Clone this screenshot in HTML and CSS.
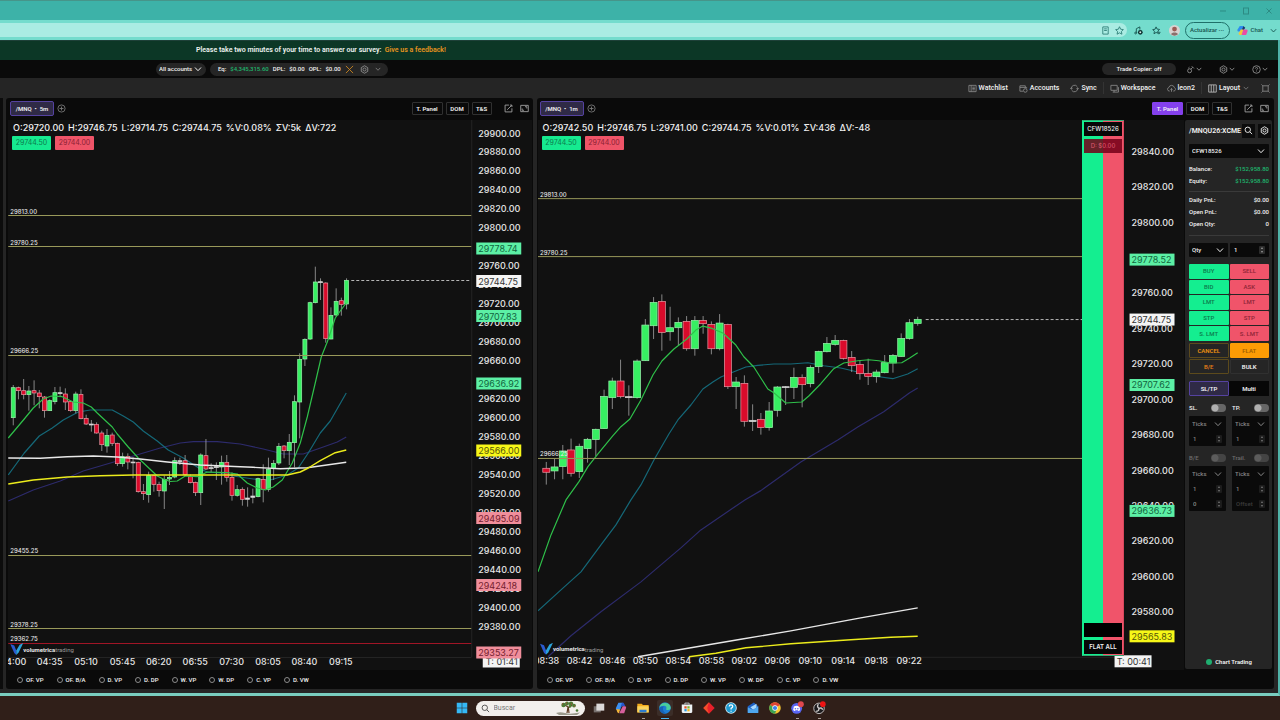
FILE: index.html
```html
<!DOCTYPE html>
<html lang="en">
<head>
<meta charset="utf-8">
<title>Volumetrica Trading</title>
<link rel="stylesheet" href="styles.css">
</head>
<body>
<svg class="sprite" aria-hidden="true">
  <symbol id="chev" viewBox="0 0 8 8"><path d="M1 2.5 4 5.7 7 2.5"/></symbol>
  <symbol id="gear" viewBox="0 0 10 10"><path d="M5 .8 8.6 2.9V7.1L5 9.2 1.4 7.1V2.9Z"/><circle cx="5" cy="5" r="1.7"/></symbol>
  <symbol id="plus" viewBox="0 0 10 10"><circle cx="5" cy="5" r="4"/><path d="M5 2.8V7.2M2.8 5H7.2"/></symbol>
  <symbol id="edit" viewBox="0 0 10 10"><path d="M5.5 1.2H1.2V8.8H8.8V4.8M3.6 6.4 8.6 1.4M6.6 1.2H8.8V3.4"/></symbol>
  <symbol id="expand" viewBox="0 0 10 10"><path d="M.8 1.5H9.2V8.5H.8ZM5.6 3H7.6V5M2.4 5V7H4.4"/></symbol>
  <symbol id="vlogo" viewBox="0 0 13 12"><path d="M0 1 4 2.4 6 7.6 6 12 4 10Z" fill="#2b5bd0"/><path d="M13 0 9.4 1.8 6 7.6V12L8.4 9.4Z" fill="#2ba4dc"/></symbol>
</svg>

<header class="titlebar">
  <button class="win" aria-label="Minimize"><svg viewBox="0 0 8 8"><path d="M1 4H7"/></svg></button>
  <button class="win" aria-label="Maximize"><svg viewBox="0 0 8 8"><rect x="1.5" y="1" width="5" height="6"/></svg></button>
  <button class="win" aria-label="Close"><svg viewBox="0 0 8 8"><path d="M1.5 1.5 6.5 6.5M6.5 1.5 1.5 6.5"/></svg></button>
</header>
<nav class="toolbar">
  <div class="address">
    <svg class="ic" viewBox="0 0 10 10"><path d="M2 1H8V9H2ZM3.5 3.2H6.5M3.5 5H6.5"/></svg>
    <svg class="ic" viewBox="0 0 10 10"><path d="M5 .8 6.3 3.6 9.3 4 7.1 6.1 7.7 9.1 5 7.6 2.3 9.1 2.9 6.1 .7 4 3.7 3.6Z"/></svg>
  </div>
  <svg class="ic ext1" viewBox="0 0 10 10"><path d="M2.6 7.6V3L6.5 1V4"/><circle cx="1.8" cy="7.8" r="1"/><circle cx="7" cy="7" r="2.6" fill="#0b2f2e" stroke="none"/><path d="M6 7H8M7 6V8" stroke="#e8fffb"/></svg>
  <svg class="ic ext2" viewBox="0 0 10 10"><path d="M4.5 1 5.6 3.4 8.4 3.8 6.4 5.8 6.6 8 4.5 7.2 2.2 8.6 2.7 5.9 .8 4 3.4 3.6ZM7.6 6V9M9.2 6.6 7.6 9"/></svg>
  <svg class="avatar" viewBox="0 0 12 12"><circle cx="6" cy="6" r="6" fill="#d9d3d1"/><circle cx="6" cy="4.4" r="2.6" fill="#9b5b54"/><path d="M2.2 10.2C3 7.6 9 7.6 9.8 10.2A6 6 0 0 1 2.2 10.2Z" fill="#8a6f6c"/></svg>
  <button class="update">Actualizar <b>···</b></button>
  <button class="chat"><svg viewBox="0 0 12 12"><path d="M3 1H7L5 7H1Q0 7 .6 5Z" fill="#2b8df0"/><path d="M7 1 9 3 7 6 5.4 5Z" fill="#17356f"/><path d="M4 5 7 5 5 11H3Q1.6 11 2 9Z" fill="#f5c53a"/><path d="M7 5H10.6Q12 5 11.4 7L10 11H5Z" fill="#ea4ea5"/></svg>Chat</button>
  <svg class="ic tchev"><use href="#chev"/></svg>
</nav>

<div class="frame">
  <div class="banner">Please take two minutes of your time to answer our survey:  <a href="#">Give us a feedback!</a></div>

  <div class="accountbar">
    <label class="select pill allacc"><select aria-label="Accounts"><option>All accounts</option></select><svg class="ic"><use href="#chev"/></svg></label>
    <div class="pill totals">
      <span>Eq:</span><span class="money">$4,345,315.60</span><span>DPL:</span><span>$0.00</span><span>OPL:</span><span>$0.00</span>
      <svg class="ic xx" viewBox="0 0 10 10"><path d="M1 1 9 9M9 1 1 9"/></svg>
      <svg class="ic dim"><use href="#gear"/></svg><svg class="ic dim small"><use href="#chev"/></svg>
    </div>
    <div class="right">
      <button class="pill copier">Trade Copier: off</button>
      <button class="menu"><svg class="ic dim" viewBox="0 0 10 10"><circle cx="4" cy="6.4" r="2.2"/><path d="M5.5 4.6 7.4 2.6M6.4 1.4 8.8 3.8M2.6 3.4 3.8 2.4"/></svg><svg class="ic small"><use href="#chev"/></svg></button>
      <button class="menu"><svg class="ic dim"><use href="#gear"/></svg><svg class="ic small"><use href="#chev"/></svg></button>
      <button class="menu"><svg class="ic dim" viewBox="0 0 10 10"><circle cx="5" cy="5" r="4.2"/><path d="M3.7 4Q3.8 2.8 5 2.8T6.2 4Q6.2 4.7 5 5.4V6M5 7V7.5"/></svg><svg class="ic small"><use href="#chev"/></svg></button>
    </div>
  </div>

  <div class="tools">
    <button><svg class="ic" viewBox="0 0 10 10"><path d="M1 1.5H9V8.5H1ZM3.5 1.5V8.5M4.8 3.5H7.6M4.8 5H7.6M4.8 6.5H7.6"/></svg>Watchlist</button>
    <button class="g"><svg class="ic" viewBox="0 0 10 10"><path d="M1 2V8H4.6M1 2H7V4M1 3.8H8.5V5"/><circle cx="7" cy="7.2" r="2"/></svg>Accounts</button>
    <button class="g"><svg class="ic" viewBox="0 0 10 10"><path d="M1.4 5.5A3.7 3.7 0 0 1 8 2.8M8.6 4.5A3.7 3.7 0 0 1 2 7.2M.4 4.3 1.4 5.8 2.9 4.7M9.6 5.7 8.6 4.2 7.1 5.3"/></svg>Sync</button>
    <i></i>
    <button><svg class="ic" viewBox="0 0 10 10"><path d="M1 1.5H8V7H1ZM3 9H9.4V3.5M4.5 7V9"/></svg>Workspace</button>
    <button class="g"><svg class="ic" viewBox="0 0 10 10"><path d="M3 7.8H2.4A2 2 0 0 1 2 3.9 3.2 3.2 0 0 1 8.2 4 2 2 0 0 1 7.8 7.8H7M5 8.6V5M3.8 6.2 5 5 6.2 6.2"/></svg>leon2</button>
    <i></i>
    <button><svg class="ic lit" viewBox="0 0 10 10"><path d="M.8 1H9.2V9H.8ZM3.6 1V9M6.4 1V9"/></svg>Layout<svg class="ic small lay"><use href="#chev"/></svg></button>
    <button class="full" aria-label="Full screen"><svg class="ic" viewBox="0 0 10 10"><path d="M2 2H8V8H2ZM.5 .5 2 2M9.5 .5 8 2M.5 9.5 2 8M9.5 9.5 8 8"/></svg></button>
  </div>

  <main class="workspace">
    <div class="sliver"></div>

    <section class="panel five">
      <div class="phead">
        <button class="sym">/MNQ &nbsp;•&nbsp; 5m</button><button class="add" aria-label="Add"><svg class="ic"><use href="#plus"/></svg></button>
        <div class="pbtns"><button class="tp">T. Panel</button><button class="dm">DOM</button><button class="ts">T&amp;S</button>
        <button class="ib e1" aria-label="Pop out"><svg class="ic"><use href="#edit"/></svg></button><button class="ib" aria-label="Expand"><svg class="ic"><use href="#expand"/></svg></button></div>
      </div>
      <div class="pbody">
        <div class="chart">
          <svg class="plot" id="left" viewBox="8 120 523 550" role="img" aria-label="MNQ 5 minute chart"></svg>
          <div class="over">
            <p class="ohlc"><span>O:29720.00</span><span>H:29746.75</span><span>L:29714.75</span><span>C:29744.75</span><span>%V:0.08%</span><span>ΣV:5k</span><span>ΔV:722</span></p>
            <div class="quote"><button class="bid">29744.50</button><button class="ask">29744.00</button></div>
          </div>
        </div>
      </div>
      <div class="pfoot">
        <label><input type="radio">OF. VP</label><label><input type="radio">OF. B/A</label><label><input type="radio">D. VP</label><label><input type="radio">D. DP</label><label><input type="radio">W. VP</label><label><input type="radio">W. DP</label><label><input type="radio">C. VP</label><label><input type="radio">D. VW</label>
      </div>
    </section>

    <section class="panel one">
      <div class="phead">
        <button class="sym">/MNQ &nbsp;•&nbsp; 1m</button><button class="add" aria-label="Add"><svg class="ic"><use href="#plus"/></svg></button>
        <div class="pbtns"><button class="tp on">T. Panel</button><button class="dm">DOM</button><button class="ts">T&amp;S</button>
        <button class="ib e1" aria-label="Pop out"><svg class="ic"><use href="#edit"/></svg></button><button class="ib" aria-label="Expand"><svg class="ic"><use href="#expand"/></svg></button></div>
      </div>
      <div class="pbody">
        <div class="chart">
          <svg class="plot" id="right" viewBox="537 120 647 550" role="img" aria-label="MNQ 1 minute chart"></svg>
          <div class="over">
            <p class="ohlc"><span>O:29742.50</span><span>H:29746.75</span><span>L:29741.00</span><span>C:29744.75</span><span>%V:0.01%</span><span>ΣV:436</span><span>ΔV:-48</span></p>
            <div class="quote"><button class="bid">29744.50</button><button class="ask">29744.00</button></div>
          </div>
          <div class="ladder">
            <div class="acct">CFW18526</div>
            <div class="pnl">D: $0.00</div>
            <div class="blank"></div>
            <button class="flatall">FLAT ALL</button>
          </div>
        </div>
        <aside class="side">
          <div class="stitle"><h2>/MNQU26:XCME</h2><button aria-label="Search"><svg class="ic" viewBox="0 0 10 10"><circle cx="4.2" cy="4.2" r="3"/><path d="M6.5 6.5 9 9"/></svg></button><button aria-label="Settings"><svg class="ic"><use href="#gear"/></svg></button></div>
          <label class="select box acc"><select aria-label="Account"><option>CFW18526</option></select><svg class="ic"><use href="#chev"/></svg></label>
          <dl class="stats"><div><dt>Balance:</dt><dd class="up">$152,958.80</dd></div><div><dt>Equity:</dt><dd class="up">$152,958.80</dd></div></dl>
          <dl class="stats line"><div><dt>Daily PnL:</dt><dd>$0.00</dd></div><div><dt>Open PnL:</dt><dd>$0.00</dd></div><div><dt>Open Qty:</dt><dd>0</dd></div></dl>
          <div class="qty"><label class="select box"><select aria-label="Size type"><option>Qty</option></select><svg class="ic"><use href="#chev"/></svg></label><label class="num box"><input type="text" value="1" aria-label="Quantity"><b></b></label></div>
          <div class="orders"><button class="b">BUY</button><button class="s">SELL</button><button class="b">BID</button><button class="s">ASK</button><button class="b">LMT</button><button class="s">LMT</button><button class="b">STP</button><button class="s">STP</button><button class="b">S. LMT</button><button class="s">S. LMT</button></div>
          <div class="acts"><button class="o">CANCEL</button><button class="flat">FLAT</button><button class="o be">B/E</button><button class="bulk">BULK</button></div>
          <div class="tabs"><button class="on">SL/TP</button><button>Multi</button></div>
          <div class="brackets">
            <div><label class="tog">SL.<input type="checkbox"></label>
              <div class="stack"><label class="select"><select aria-label="SL unit"><option>Ticks</option></select><svg class="ic"><use href="#chev"/></svg></label><label class="num"><input type="text" value="1" aria-label="SL value"><b></b></label></div></div>
            <div><label class="tog">TP.<input type="checkbox"></label>
              <div class="stack"><label class="select"><select aria-label="TP unit"><option>Ticks</option></select><svg class="ic"><use href="#chev"/></svg></label><label class="num"><input type="text" value="1" aria-label="TP value"><b></b></label></div></div>
            <div><label class="tog off">B/E<input type="checkbox"></label>
              <div class="stack"><label class="select"><select aria-label="B/E unit"><option>Ticks</option></select><svg class="ic"><use href="#chev"/></svg></label><label class="num"><input type="text" value="1" aria-label="B/E value"><b></b></label><label class="num"><input type="text" value="0" aria-label="B/E offset"><b></b></label></div></div>
            <div><label class="tog off">Trail.<input type="checkbox"></label>
              <div class="stack"><label class="select"><select aria-label="Trail unit"><option>Ticks</option></select><svg class="ic"><use href="#chev"/></svg></label><label class="num"><input type="text" value="1" aria-label="Trail value"><b></b></label><label class="num"><input type="text" placeholder="Offset" aria-label="Trail offset"><b></b></label></div></div>
          </div>
          <div class="status"><i></i>Chart Trading</div>
        </aside>
      </div>
      <div class="pfoot">
        <label><input type="radio">OF. VP</label><label><input type="radio">OF. B/A</label><label><input type="radio">D. VP</label><label><input type="radio">D. DP</label><label><input type="radio">W. VP</label><label><input type="radio">W. DP</label><label><input type="radio">C. VP</label><label><input type="radio">D. VW</label>
      </div>
    </section>
  </main>
</div>

<footer class="taskbar">
  <button class="app" aria-label="Start"><svg viewBox="0 0 16 16"><path d="M2 2H7.7V7.7H2ZM8.3 2H14V7.7H8.3ZM2 8.3H7.7V14H2ZM8.3 8.3H14V14H8.3Z" fill="#35b8f5"/></svg></button>
  <label class="search"><svg class="ic" viewBox="0 0 10 10"><circle cx="4.2" cy="4.2" r="3"/><path d="M6.5 6.5 9 9"/></svg><input type="text" placeholder="Buscar" aria-label="Buscar">
    <svg class="tree" viewBox="0 0 25 14"><path d="M0 12Q4 10.5 9 12T24 11.5L21 14H3Z" fill="#9b9a8c"/><path d="M11 12 12 6 9 4M12 7 16 4M13 12 12.4 7" stroke="#5d3a21" stroke-width="1.2" fill="none"/><g fill="#4c7a34"><circle cx="7.5" cy="4" r="2.2"/><circle cx="11" cy="2.6" r="2"/><circle cx="15" cy="2.6" r="2.2"/><circle cx="18" cy="4.6" r="1.9"/><circle cx="14" cy="5.3" r="1.4"/></g><path d="M6 3H7M10 2H11M15 3H16M18 5H19" stroke="#b8433a"/><circle cx="21" cy="9.5" r="1.3" fill="#4c7a34"/></svg></label>
  <button class="app" aria-label="Task view"><svg viewBox="0 0 16 16"><path d="M2 6H10V13H2Z" fill="#77706e"/><path d="M5 3H14V11H5Z" fill="#dcd9d8"/></svg></button>
  <button class="app" aria-label="Copilot"><svg viewBox="0 0 16 16"><path d="M5 2H10L7 10H3Q1.6 10 2.2 8Z" fill="#3b8ff0"/><path d="M9 2 11 2 13 6H9L7.4 8Z" fill="#2753c8"/><path d="M2.6 9 7 9.6 5.6 14Q4 14 3.6 12.4Z" fill="#f2b63b"/><path d="M10 6H12.6Q14.4 6 13.8 8L11.6 14H6Z" fill="#d7609c"/></svg></button>
  <button class="app run" aria-label="File Explorer"><svg viewBox="0 0 16 16"><path d="M1.5 3H6.5L8 4.6H14.5V13H1.5Z" fill="#f3ab1c"/><path d="M1.5 6H14.5V13H1.5Z" fill="#fbd45c"/><path d="M4 10H12V13H4Z" fill="#2c7bd0"/></svg></button>
  <button class="app run cur" aria-label="Edge"><svg viewBox="0 0 16 16"><circle cx="8" cy="8" r="6.6" fill="#1e7fd4"/><path d="M1.5 8A6.6 6.6 0 0 1 14.6 8Q14.4 10.4 11.6 10.4T9.4 9Q10.4 6 7.4 5.4 3 5 1.5 8Z" fill="#49cf9c"/><path d="M5.6 8.6Q5.6 12.8 10 14.2 6 15.4 3.2 12.6 1 10 1.6 7.6Q3.6 5.6 6.8 6.4 5.6 7.4 5.6 8.6Z" fill="#1763b8"/></svg></button>
  <button class="app" aria-label="Store"><svg viewBox="0 0 16 16"><path d="M5.6 4V2.4H10.4V4" stroke="#cfd8de" fill="none"/><path d="M2 4H14V12.4Q14 13.6 12.8 13.6H3.2Q2 13.6 2 12.4Z" fill="#eef2f4"/><path d="M5 6H7.6V8.6H5Z" fill="#e4512b"/><path d="M8.4 6H11V8.6H8.4Z" fill="#7fb72f"/><path d="M5 9.2H7.6V11.8H5Z" fill="#2a9ae0"/><path d="M8.4 9.2H11V11.8H8.4Z" fill="#f5b51c"/></svg></button>
  <button class="app" aria-label="AnyDesk"><svg viewBox="0 0 16 16"><path d="M8 1.5 14.5 8 8 14.5 1.5 8Z" fill="#e8202a"/><path d="M1.5 8 8 1.5 6 8 8 14.5Z" fill="#f2502c"/></svg></button>
  <button class="app" aria-label="Help"><svg viewBox="0 0 16 16"><circle cx="8" cy="8" r="6.6" fill="#d8f0fa"/><circle cx="8" cy="8" r="5.6" fill="#1f9bd2"/><path d="M6 6.4Q6 4.4 8 4.4T10 6.3Q10 7.4 8.1 8.4V9.6M8.1 11V12.2" stroke="#fff" stroke-width="1.4" fill="none"/></svg></button>
  <button class="app" aria-label="Mail"><svg viewBox="0 0 16 16"><path d="M2 6 9 1.6 14 6V13H2Z" fill="#1c5fc4"/><path d="M2 7 8 10.4 14 6V13.6H2Z" fill="#4ea7ef"/><path d="M5 7 12 3V7.4L8 10Z" fill="#a8d8fb"/></svg></button>
  <button class="app" aria-label="Chrome"><svg viewBox="0 0 16 16"><circle cx="8" cy="8" r="6.6" fill="#f4c430"/><path d="M8 8 2.3 4.7A6.6 6.6 0 0 1 13.7 4.7Z" fill="#df4434"/><path d="M8 8 2.3 4.7A6.6 6.6 0 0 0 8 14.6L10 9Z" fill="#3ba455"/><path d="M8 4.7H13.7L8 6Z" fill="#df4434"/><circle cx="8" cy="8" r="3.1" fill="#fff"/><circle cx="8" cy="8" r="2.4" fill="#3f7fe8"/></svg></button>
  <button class="app run" aria-label="Discord"><svg viewBox="0 0 16 16"><circle cx="7.6" cy="8.4" r="6.2" fill="#5865f2"/><path d="M4.4 6.2Q7.6 4.8 10.8 6.2L11.6 10.4Q10.6 11.4 9.6 11.4L9 10.6H6.2L5.6 11.4Q4.6 11.4 3.6 10.4Z" fill="#fff"/><circle cx="6.2" cy="8.8" r=".9" fill="#5865f2"/><circle cx="9" cy="8.8" r=".9" fill="#5865f2"/><circle cx="12.4" cy="3.6" r="3.4" fill="#e0484e"/></svg></button>
  <button class="app run" aria-label="OBS"><svg viewBox="0 0 16 16"><circle cx="8" cy="8.4" r="6" fill="#1c1b1d" stroke="#d0cccc"/><path d="M8 8.4Q5 6 7.4 3.8M8 8.4Q11.6 7 12 10M8 8.4Q8 12 4.8 11.6" stroke="#d0cccc" stroke-width="1.6" fill="none"/><circle cx="12.4" cy="3.6" r="3.2" fill="#ee1414"/></svg></button>
</footer>
<script src="chart.js"></script>
</body>
</html>
```

FILE: styles.css
```css
* { box-sizing: border-box; }
body {
  margin: 0; height: 100vh; display: flex; flex-direction: column; overflow: hidden;
  background: #261c18; color: #f2f2f2;
  font: 500 6px/8px Roboto, "Open Sans", sans-serif;
}
button, input, select { font: inherit; color: inherit; background: none; border: 0; padding: 0; margin: 0; border-radius: 0; }
input { outline: 0; min-width: 0; }
select { appearance: none; width: 100%; height: 100%; }
p, h2, dl, dd { margin: 0; }
.sprite { position: absolute; width: 0; height: 0; }
.ic { width: 9px; height: 9px; flex: none; fill: none; stroke: currentColor; stroke-width: 1; }
.small { width: 6px; height: 6px; }
.dim { color: #8d8d8d; }

/* browser window */
.titlebar { flex: 0 0 20px; background: #3db2a8; border-top: 1px solid #46958a; display: flex; justify-content: flex-end; align-items: center; gap: 15px; padding-right: 7px; }
.win { width: 8px; height: 8px; display: flex; }
.win svg { width: 8px; height: 8px; fill: none; stroke: #2d8b83; stroke-width: 1; }
.toolbar { flex: 0 0 20px; background: #74dccd; display: flex; align-items: center; color: #17544f; padding-right: 3px; }
.address { flex: 1; height: 14px; background: #aaece3; border-radius: 0 7px 7px 0; display: flex; justify-content: flex-end; align-items: center; gap: 5px; padding-right: 3px; color: #2f7f78; }
.ext1 { margin-left: 7px; }
.ext2 { margin-left: 9px; }
.avatar { width: 11px; height: 11px; margin-left: 8px; }
.update { width: 45px; height: 17px; margin-left: 5px; border: 1px solid #1f7069; border-radius: 9px; white-space: nowrap; }
.update b { font-weight: 700; }
.chat { display: flex; align-items: center; gap: 3px; margin-left: 7px; }
.chat svg { width: 11px; height: 11px; }
.tchev { width: 7px; height: 7px; margin-left: 7px; }

.frame { flex: 1; min-height: 0; display: flex; flex-direction: column; background: #252525; border-right: 2px solid #4fb3a8; border-bottom: 3px solid #79cdbf; }
.banner { flex: 0 0 20px; background: #0c3726; border-top: 1px solid #1e4038; padding-left: 196px; font-size: 7px; font-weight: 600; line-height: 19px; color: #eef3f0; white-space: pre; }
.banner a { color: #e5941f; text-decoration: none; }

.accountbar { flex: 0 0 18px; background: #0a0a0a; display: flex; align-items: center; padding: 0 10px 0 156px; gap: 4px; }
.pill { height: 13px; border-radius: 7px; background: #252525; display: flex; align-items: center; }
.select { position: relative; display: block; }
.select .ic { position: absolute; right: 4px; top: 0; bottom: 0; margin: auto 0; width: 8px; height: 8px; pointer-events: none; }
.allacc { width: 50px; }
.allacc select { padding-left: 3px; }
.totals { width: 178px; padding: 0 9px 0 8px; gap: 4px; white-space: nowrap; }
.totals .money { color: #1fb56d; }
.xx { color: #c88420; margin-left: auto; }
.totals .dim { margin-left: 2px; }
.right { margin-left: auto; display: flex; align-items: center; }
.copier { width: 74px; height: 12px; justify-content: center; margin-right: 10px; }
.menu { display: flex; align-items: center; gap: 1px; margin-left: 17px; color: #a8a8a8; }
.copier + .menu { margin-left: 0; }

.tools { flex: 0 0 20px; background: #252525; display: flex; align-items: center; justify-content: flex-end; padding-right: 8px; font-size: 7px; }
.tools button { display: flex; align-items: center; gap: 2px; white-space: nowrap; }
.tools .ic { color: #858585; }
.tools .lit { color: #b5b5b5; }
.tools .lay { margin-left: 1px; }
.tools i { width: 1px; height: 12px; background: #343434; margin: 0 6px; }
.tools .g { margin-left: 11px; }
.tools .full { margin-left: 12px; }

/* chart panels */
.workspace { flex: 1; min-height: 0; display: flex; padding: 0 4px 4px 0; }
.sliver { flex: 0 0 3px; background: #0c0c0c; margin-right: 3px; }
.panel { display: flex; flex-direction: column; min-width: 0; background: #0a0a0a; border-radius: 3px; }
.five { flex: 526 1 0; margin-right: 4px; padding: 0 1px 0 2px; }
.one { flex: 738 1 0; padding: 0 2px 0 1px; }
.phead { flex: 0 0 22px; display: flex; align-items: center; padding: 0 3px 1px 2px; font-weight: 600; }
.sym { width: 44px; height: 15px; border: 1px solid #5542a0; border-radius: 2px; background: #2f2a46; white-space: nowrap; }
.add { margin-left: 3px; display: flex; color: #777; }
.pbtns { margin-left: auto; display: flex; align-items: center; }
.pbtns button { height: 13px; border: 1px solid #303030; border-radius: 1px; margin-right: 3px; }
.pbtns .tp { width: 31px; }
.pbtns .dm { width: 23px; }
.pbtns .ts { width: 20px; }
.pbtns .on { background: #8440ec; border-color: #8440ec; }
.pbtns .ib { border: 0; display: flex; align-items: center; color: #a0a0a0; margin: 0; }
.pbtns .e1 { margin: 0 7px 0 9px; }
.pbody { flex: 1; min-height: 0; display: flex; gap: 1px; }
.chart { flex: 1; min-width: 0; position: relative; background: #111; }
.plot { display: block; width: 100%; height: 100%; }
.over { position: absolute; left: 4px; top: 2px; font-family: Inter, "Open Sans", sans-serif; }
.ohlc { display: flex; gap: 4px; font-size: 9px; line-height: 12px; font-weight: 500; white-space: nowrap; padding-left: 1px; }
.quote { display: flex; gap: 4px; margin-top: 2px; }
.quote button { width: 39px; height: 14px; border-radius: 1px; font-size: 7px; font-weight: 400; }
.bid { background: #16ea90; color: #0c7a4d; }
.ask { background: #ef5468; color: #8a2133; }
.ladder { position: absolute; right: 60px; top: 0; bottom: 14px; width: 42px; padding: 1px; display: flex; flex-direction: column; gap: 3px; background: linear-gradient(90deg, #14ee90 50%, #f0546a 50%); border: 1px solid; border-color: #2fae74 #d7475c #2fae74 #14ee90; text-align: center; font-family: Inter, "Open Sans", sans-serif; font-weight: 500; }
.ladder > * { height: 14px; line-height: 14px; flex: none; background: #070707; }
.ladder .pnl { background: rgba(117, 0, 24, .86); color: #d7546a; }
.ladder .blank { margin-top: auto; background: #000; }
.ladder .flatall { font-weight: 600; }
.pfoot { flex: 0 0 19px; display: flex; align-items: center; padding-left: 9px; gap: 13px; }
.pfoot label { display: flex; align-items: center; gap: 3px; white-space: nowrap; }
.pfoot input { appearance: none; width: 6px; height: 6px; border: 1px solid #8b8b8b; border-radius: 50%; }

/* chart drawing */
.plot text { font-family: Inter, "Open Sans", sans-serif; font-size: 9px; font-weight: 500; fill: #e6e6e6; dominant-baseline: central; }
.plot .mid { text-anchor: middle; }
.plot .lvl { font-size: 6px; }
.plot .tag { font-weight: 400; }
.plot .brand { font-family: Roboto, "Open Sans", sans-serif; font-size: 6px; font-weight: 700; }
.plot .thin { font-weight: 400; fill: #9a9a9a; dominant-baseline: central; }
.plot polyline { fill: none; stroke-linejoin: round; }

/* trading panel */
.side { flex: 0 0 87px; min-width: 0; background: #252525; border-radius: 2px; padding: 3px 3px 3px 4px; display: flex; flex-direction: column; margin-bottom: 1px; }
.stitle { display: flex; align-items: center; height: 15px; margin-right: -2px; }
.stitle h2 { font-size: 7px; font-weight: 600; flex: 1; min-width: 0; white-space: nowrap; }
.stitle button { width: 13px; height: 14px; background: #0c0c0c; display: flex; align-items: center; justify-content: center; margin-left: 3px; flex: none; }
.stitle button:first-of-type { margin-left: 0; }
.box { height: 14px; background: #0a0a0a; border-radius: 1px; }
.box select { padding-left: 3px; }
.acc { margin-top: 6px; }
.stats { padding: 5px 0 4px; border-bottom: 1px solid #3a3a3a; }
.stats div { display: flex; justify-content: space-between; line-height: 12px; }
.stats .up { color: #1fb56d; }
.line { padding: 2px 0 5px; }
.qty { display: grid; grid-template-columns: repeat(2, minmax(0, 1fr)); gap: 2px; margin-top: 7px; }
.num { display: flex; align-items: center; padding: 0 4px; }
.num input { flex: 1; width: 0; }
.num b { width: 6px; height: 8px; border-radius: 1px; background: #2c2c2c; display: flex; flex-direction: column; align-items: center; justify-content: center; gap: 2px; }
.num b::before, .num b::after { content: ""; width: 0; border: 1px solid transparent; border-bottom: 2px solid #9c9c9c; border-top: 0; }
.num b::after { border-bottom: 0; border-top: 2px solid #9c9c9c; }
.orders { display: grid; grid-template: repeat(5, minmax(0, 1fr)) / repeat(2, minmax(0, 1fr)); gap: 1px; height: 77px; margin-top: 7px; }
.orders button { border-radius: 1px; }
.b { background: #14ee90; color: #0d7a4c; }
.s { background: #f0546a; color: #8d2436; }
.acts { display: grid; grid-template-columns: repeat(2, minmax(0, 1fr)); gap: 1px; margin-top: 2px; font-weight: 600; }
.acts button { height: 15px; border: 1px solid #303030; border-radius: 1px; }
.acts .o { color: #ed9210; border-color: #5c4a1c; }
.acts .be { color: #e07d18; }
.acts .flat { background: #fd9c05; border-color: #fd9c05; color: #a35f00; }
.tabs { display: grid; grid-template-columns: repeat(2, minmax(0, 1fr)); margin-top: 7px; background: #070707; font-weight: 600; }
.tabs button { height: 15px; border: 1px solid transparent; border-radius: 1px; }
.tabs .on { border-color: #5542a0; background: #2f2a46; }
.brackets { display: grid; grid-template-columns: repeat(2, minmax(0, 1fr)); column-gap: 6px; row-gap: 4px; margin-top: 4px; }
.tog { display: flex; align-items: center; justify-content: space-between; height: 16px; }
.tog input { appearance: none; width: 15px; height: 8px; border-radius: 4px; background: radial-gradient(circle at 4px 4px, #b0b0b0 0 3px, #676767 4px); }
.off { color: #6d6d6d; }
.off input { background: radial-gradient(circle at 4px 4px, #5c5c5c 0 3px, #444 4px); }
.stack { background: #0a0a0a; border-radius: 1px; color: #878787; }
.stack > label { height: 15px; }
.stack select { padding-left: 3px; }
.stack input::placeholder { color: #3c3c3c; opacity: 1; }
.stack b { background: #1c1c1c; }
.stack b::before { border-bottom-color: #777; }
.stack b::after { border-top-color: #777; }
.status { margin-top: auto; display: flex; justify-content: center; align-items: center; gap: 3px; font-weight: 600; }
.status i { width: 6px; height: 6px; border-radius: 50%; background: #1fae70; }

/* taskbar */
.taskbar { flex: 0 0 24px; background: #301f19; display: flex; align-items: center; justify-content: center; gap: 6px; }
.app { width: 16px; height: 16px; display: flex; position: relative; }
.app svg { width: 16px; height: 16px; padding: 1px; }
.run::after { content: ""; position: absolute; left: 7px; bottom: -3px; width: 3px; height: 1px; background: #a89d98; }
.cur { background: #3b2d28; border-radius: 2px; }
.cur::after { left: 4px; width: 8px; background: #4ab5f2; }
.search { width: 109px; height: 15px; border-radius: 8px; background: #f2efec; display: flex; align-items: center; padding: 0 4px 0 5px; gap: 4px; color: #4a4a4a; font-size: 7px; font-weight: 400; }
.search input { flex: 1; }
.search input::placeholder { color: #777; opacity: 1; }
.tree { width: 25px; height: 14px; }
```

FILE: chart.js
```js
const NS = 'http://www.w3.org/2000/svg';

function add(svg, tag, attrs, text) {
  const el = document.createElementNS(NS, tag);
  for (const k in attrs) el.setAttribute(k, attrs[k]);
  if (text !== undefined) el.textContent = text;
  svg.appendChild(el);
  return el;
}

// rows: [direction, high, body top, body bottom, low], in thirds of a unit below y0
function candles(svg, x0, step, start, y0, width, rows) {
  rows.forEach(([dir, hi, top, bot, lo], i) => {
    const x = x0 + step * (start + i);
    const y = v => y0 + v / 3;
    add(svg, 'line', { x1: x, x2: x, y1: y(hi), y2: y(lo), stroke: '#a4a4a4', 'stroke-width': 0.8 });
    add(svg, 'rect', {
      x: x - width / 2, y: y(top), width, height: Math.max(0.9, (bot - top) / 3),
      fill: dir === 'g' ? '#37ef62' : dir === 'r' ? '#d90b2b' : '#e4e4e4',
      stroke: dir === 'g' ? '#9af2ac' : dir === 'r' ? '#e79aa4' : '#d0d0d0', 'stroke-width': 0.7
    });
  });
}

const curve = (svg, stroke, points, w) =>
  add(svg, 'polyline', { points, stroke, 'stroke-width': w || 1.2 });

function levels(svg, x1, x2, list) {
  list.forEach(([y, label, labelY, color]) => {
    add(svg, 'line', { x1, x2, y1: y, y2: y, stroke: color || '#99995a', 'stroke-width': 1 });
    add(svg, 'text', { x: x1 + 2, y: labelY, class: 'lvl' }, label);
  });
}

function axis(svg, x, prices, top, y0, scale) {
  prices.forEach(p => add(svg, 'text', { x, y: y0 + (top - p) * scale }, p.toFixed(2)));
}

function tags(svg, x, list) {
  list.forEach(([y, label, bg, fg]) => {
    add(svg, 'rect', { x: x - 2, y: y - 6, width: 45, height: 12, fill: bg });
    add(svg, 'text', { x, y, class: 'tag', style: 'fill:' + fg }, label);
  });
}

function timer(svg, x, y, label) {
  add(svg, 'rect', { x: x - 19, y: y - 6, width: 37, height: 12, fill: '#f4f4f4' });
  add(svg, 'text', { x, y, class: 'mid tag', style: 'fill:#333' }, label);
}

function brand(svg, x) {
  add(svg, 'use', { href: '#vlogo', x, y: 643, width: 13, height: 12 });
  const t = add(svg, 'text', { x: x + 13, y: 649, class: 'brand' }, 'volumetrica');
  add(t, 'tspan', { class: 'thin' }, 'trading');
}

const range = (from, to, skip) => {
  const out = [];
  for (let p = from; p >= to; p -= 20) if (!skip.includes(p)) out.push(p);
  return out;
};

const MINT = ['#5cf0a5', '#12653f'], PINK = ['#f08e9b', '#74202e'], YEL = ['#f7f718', '#55550a'], WHITE = ['#f5f5f5', '#333'];

/* five-minute chart */
const L = document.getElementById('left');
add(L, 'path', { d: 'M471.5 120V657.5M8 657.5H471', stroke: '#242424', fill: 'none' });
curve(L, '#2d2b6c', '8,501 33,490 60,481 83,471 117,461 133,456 160,448 180,443 193,441.7 217,441.7 240,444 263,449 283,454 303,454 323,447 337,442 346,437');
curve(L, '#156878', '8,475 24,453 39,436 52,428 63,420 78,412 90,410 112,410 123,416 133,422 143,431 157,441 168,450 183,458 200,469 207,472 220,473 233,476 253,479 270,480 287,475 298,468 308,453 320,433 330,421 346,393');
candles(L, 13, 5.208, 0, 340, 4, [
  ['g',135,143,233,256],['r',140,143,152,178],['r',117,152,164,178],['g',138,153,164,212],['r',121,152,159,196],
  ['r',150,159,170,205],['r',168,171,212,233],['g',178,182,212,213],['g',141,158,185,193],['d',140,158,161,170],
  ['r',145,162,186,210],['r',183,185,212,215],['g',155,162,212,220],['r',148,163,236,238],['r',224,235,252,255],
  ['d',240,252,255,275],['r',247,253,279,281],['r',272,279,314,333],['g',267,286,318,338],['r',278,285,310,318],
  ['r',308,310,371,378],['g',338,350,371,380],['r',340,349,366,388],['d',352,366,368,415],['r',365,367,455,458],
  ['r',432,455,461,480],['g',395,406,464,488],['r',405,407,433,455],['r',425,433,452,470],['g',407,418,453,507],
  ['g',393,412,417,435],['g',352,362,411,415],['d',353,362,365,375],['r',345,362,404,408],['r',403,410,428,430],
  ['r',425,427,458,468],['g',340,345,458,495],['r',297,347,387,390],['d',370,383,386,397],['d',367,380,383,420],
  ['g',347,367,381,434],['r',345,367,412,425],['r',397,412,466,482]
]);
candles(L, 13, 5.208, 43, 250, 4, [
  ['g',705,719,736,740],['r',712,718,748,767],['d',712,744,748,770],['d',716,738,742,760],['g',683,686,740,742],
  ['r',643,688,718,757],['g',623,658,718,725],['g',630,640,656,690],['g',579,589,639,645],['r',585,588,602,625],
  ['g',552,577,602,645],['g',436,455,578,652],['g',310,328,456,565],['g',265,268,327,348],['g',155,158,267,270],
  ['g',50,96,158,160],['d',85,95,98,150],['r',97,99,266,278],['g',172,196,267,268],['g',115,154,195,200],
  ['r',143,152,163,197],['g',85,91,162,178]
]);
curve(L, '#2fc04a', '8,438 24,419 33,408 43,399 51,396 62,396.7 73,402 83,403 91,407 97,413 112,427 117,434 128,447 138,458 157,476 163,479 170,481.5 177,481 185,476 197,476.7 207,472 227,472.7 237,474 247,483 257,488 265,490 273,487 282,480 292,463 300,443 307,417 315,383 321,357 327,342 335,318 340,311 346,303');
curve(L, '#e8e8e8', '8,458 40,458.3 67,456.7 93,456 117,457 140,459 167,462 200,465 240,466.7 253,467.3 280,468.7 307,467.7 346,462.3', 1.4);
curve(L, '#ecec1c', '8,484 33,480 67,477 100,475.7 133,475 240,475 287,475 300,472 308,468 320,460.7 335,452.7 346,450', 1.4);
levels(L, 8, 471, [
  [215.5, '29813.00', 211], [246.5, '29780.25', 242], [355.5, '29666.25', 350.5],
  [555.5, '29455.25', 550.5], [628.5, '29378.25', 624], [643.5, '29362.75', 638, '#a01526']
]);
add(L, 'line', { x1: 351, x2: 471, y1: 280.5, y2: 280.5, stroke: '#b5b5b5', 'stroke-width': 1, 'stroke-dasharray': '3 2' });
axis(L, 478, range(29900, 29380, [29640, 29780]), 29900, 133, 0.949);
timer(L, 501.5, 661.5, 'T: 01:41');
tags(L, 478, [
  [248.5, '29778.74', ...MINT], [281, '29744.75', ...WHITE], [316, '29707.83', ...MINT], [383.5, '29636.92', ...MINT],
  [450.5, '29566.00', ...YEL], [518, '29495.09', ...PINK], [585, '29424.18', ...PINK], [652.5, '29353.27', ...PINK]
]);
['04:00', '04:35', '05:10', '05:45', '06:20', '06:55', '07:30', '08:05', '08:40', '09:15']
  .forEach((t, i) => add(L, 'text', { x: 13 + i * 36.4, y: 661, class: 'mid' }, t));
brand(L, 10);

/* one-minute chart */
const R = document.getElementById('right');
add(R, 'path', { d: 'M537 657.5H1124', stroke: '#242424', fill: 'none' });
curve(R, '#2d2b6c', '547,657 570,636 600,612 640,582 680,548 700,530 744,500 760,490.7 800,462 837,440 857,427 883,411.7 909,392.7 917,388');
curve(R, '#156878', '537,611 560,590 580,572 600,545 615,525 630,500 640,485 653,460 668,434 677,420 690,405 702,389 712,382 720,377 735,371 745,367 757,365.3 773,364 790,364 807,362.7 823,365.7 840,368 857,372 873,376 892,378.7 907,374 917,368.7');
candles(R, 545.3, 8.26, 0, 280, 7, [
  ['r',546,565,577,614],['g',536,561,573,598],['g',495,513,560,598],['r',476,510,580,590],['g',491,499,575,594],
  ['g',474,478,506,548],['g',446,448,479,528],['g',329,349,446,447],['g',293,303,353,387],['r',239,303,350,355],
  ['d',316,350,353,407],['g',238,243,353,356],['g',117,135,242,243],['g',51,67,137,177],['r',43,64,157,212],
  ['g',80,143,155,182],['g',112,127,143,195],['r',108,124,206,212],['g',108,121,206,227],['r',108,121,131,161],
  ['r',124,133,206,223],['g',102,129,206,211],['r',131,133,320,327],['g',291,306,320,387],['r',286,310,424,440],
  ['d',373,421,425,453]
]);
candles(R, 545.3, 8.26, 26, 290, 7, [
  ['r',369,388,413,434],['g',336,363,413,422],['g',288,291,361,380],['d',288,290,293,345],['g',233,262,292,327],
  ['r',253,262,284,352],['g',226,232,281,292],['g',182,184,230,249],['g',141,160,185,187],['g',135,151,163,167],
  ['r',149,151,205,209],['r',183,202,227,246],['r',211,223,251,269],['r',206,250,259,285],['g',239,246,260,278],
  ['g',195,218,248,250],['g',192,196,219,248],['g',130,145,199,200],['g',87,98,145,149],['g',80,88,100,107]
]);
curve(R, '#2fc04a', '537,572 550,535 565,500 578,481.7 587,466.7 597,454 612,435.7 620,426.7 629,419 640,400 652,375 661,361 673,349 686,339 695,330 702,326 710,328 722,333 735,345 743,356.7 753,367 767,389 773,392.7 785,403 801,402 808,396 820,383.7 833,368.7 843,363 857,360.7 868,359.7 878,360.7 890,363 901,362.7 909,358 917,352.7');
curve(R, '#e8e8e8', '637,657 690,648 740,639.5 790,631 860,618 917,608', 1.4);
curve(R, '#ecec1c', '688,657 715,653.5 745,648 790,644 850,640 890,637.5 917,636.5', 1.4);
levels(R, 537, 1082, [[198.5, '29813.00', 194], [256.5, '29780.25', 252], [458.5, '29666.25', 454]]);
add(R, 'line', { x1: 925, x2: 1082, y1: 319.5, y2: 319.5, stroke: '#b5b5b5', 'stroke-width': 1, 'stroke-dasharray': '3 2' });
axis(R, 1131, range(29840, 29580, [29780]), 29840, 151, 1.773);
tags(R, 1131, [
  [259.5, '29778.52', ...MINT], [319.5, '29744.75', ...WHITE], [385, '29707.62', ...MINT],
  [511, '29636.73', ...MINT], [636.5, '29565.83', ...YEL]
]);
['08:38', '08:42', '08:46', '08:50', '08:54', '08:58', '09:02', '09:06', '09:10', '09:14', '09:18', '09:22']
  .forEach((t, i) => add(R, 'text', { x: 545.5 + i * 33, y: 661, class: 'mid' }, t));
timer(R, 1133, 661.5, 'T: 00:41');
brand(R, 539);
```
